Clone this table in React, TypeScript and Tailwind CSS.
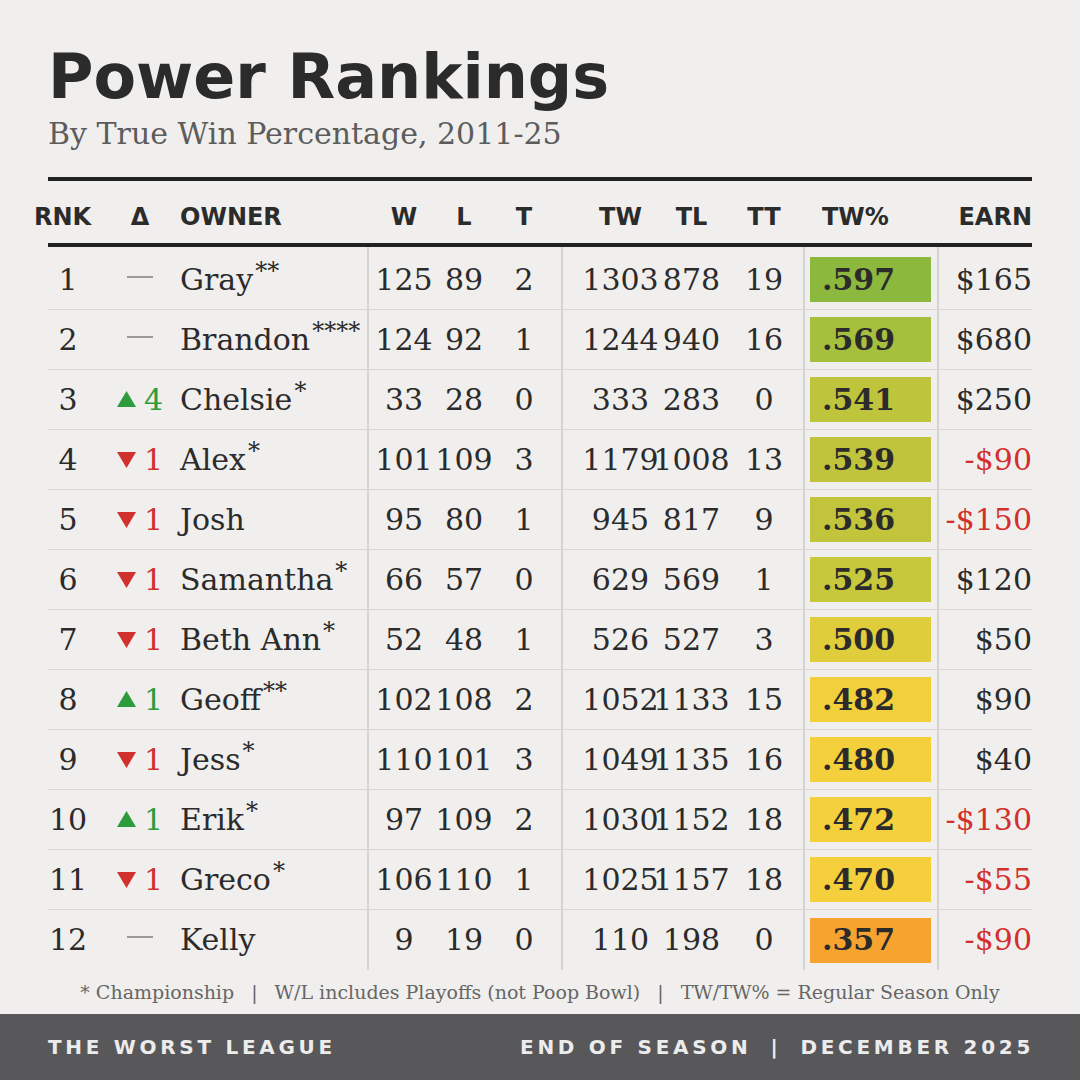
import React from "react";

type Row = {
  rank: number;
  dir: "up" | "down" | "none";
  delta?: number;
  name: string;
  stars: string;
  w: number;
  l: number;
  t: number;
  tw: number;
  tl: number;
  tt: number;
  pct: string;
  box: string;
  earn: string;
  neg: boolean;
};

const rows: Row[] = [
  { rank: 1, dir: "none", name: "Gray", stars: "**", w: 125, l: 89, t: 2, tw: 1303, tl: 878, tt: 19, pct: ".597", box: "bg-[#8bb83d]", earn: "$165", neg: false },
  { rank: 2, dir: "none", name: "Brandon", stars: "****", w: 124, l: 92, t: 1, tw: 1244, tl: 940, tt: 16, pct: ".569", box: "bg-[#a5c03d]", earn: "$680", neg: false },
  { rank: 3, dir: "up", delta: 4, name: "Chelsie", stars: "*", w: 33, l: 28, t: 0, tw: 333, tl: 283, tt: 0, pct: ".541", box: "bg-[#bec43c]", earn: "$250", neg: false },
  { rank: 4, dir: "down", delta: 1, name: "Alex", stars: "*", w: 101, l: 109, t: 3, tw: 1179, tl: 1008, tt: 13, pct: ".539", box: "bg-[#bfc43c]", earn: "-$90", neg: true },
  { rank: 5, dir: "down", delta: 1, name: "Josh", stars: "", w: 95, l: 80, t: 1, tw: 945, tl: 817, tt: 9, pct: ".536", box: "bg-[#c2c53c]", earn: "-$150", neg: true },
  { rank: 6, dir: "down", delta: 1, name: "Samantha", stars: "*", w: 66, l: 57, t: 0, tw: 629, tl: 569, tt: 1, pct: ".525", box: "bg-[#c8c83c]", earn: "$120", neg: false },
  { rank: 7, dir: "down", delta: 1, name: "Beth Ann", stars: "*", w: 52, l: 48, t: 1, tw: 526, tl: 527, tt: 3, pct: ".500", box: "bg-[#dfcd3c]", earn: "$50", neg: false },
  { rank: 8, dir: "up", delta: 1, name: "Geoff", stars: "**", w: 102, l: 108, t: 2, tw: 1052, tl: 1133, tt: 15, pct: ".482", box: "bg-[#f2d03c]", earn: "$90", neg: false },
  { rank: 9, dir: "down", delta: 1, name: "Jess", stars: "*", w: 110, l: 101, t: 3, tw: 1049, tl: 1135, tt: 16, pct: ".480", box: "bg-[#f3d03c]", earn: "$40", neg: false },
  { rank: 10, dir: "up", delta: 1, name: "Erik", stars: "*", w: 97, l: 109, t: 2, tw: 1030, tl: 1152, tt: 18, pct: ".472", box: "bg-[#f4d03c]", earn: "-$130", neg: true },
  { rank: 11, dir: "down", delta: 1, name: "Greco", stars: "*", w: 106, l: 110, t: 1, tw: 1025, tl: 1157, tt: 18, pct: ".470", box: "bg-[#f5cf3c]", earn: "-$55", neg: true },
  { rank: 12, dir: "none", name: "Kelly", stars: "", w: 9, l: 19, t: 0, tw: 110, tl: 198, tt: 0, pct: ".357", box: "bg-[#f7a32f]", earn: "-$90", neg: true },
];

function Delta({ r }: { r: Row }) {
  if (r.dir === "none") {
    return <div className="w-[26px] h-[2px] bg-[#9a9a9a] mb-[6px]" />;
  }
  const up = r.dir === "up";
  return (
    <div className={`flex items-center gap-[8px] ${up ? "text-[#2e9b3c]" : "text-[#d0312d]"}`}>
      <svg width="19" height="16" viewBox="0 0 19 16" className={up ? "mb-[1px]" : ""}>
        {up ? (
          <polygon points="9.5,0 19,16 0,16" fill="#2e9b3c" />
        ) : (
          <polygon points="0,0 19,0 9.5,16" fill="#d0312d" />
        )}
      </svg>
      <span>{r.delta}</span>
    </div>
  );
}

const vline = "border-l-2 border-[#d5d4d2]";

function DataRow({ r, last }: { r: Row; last: boolean }) {
  return (
    <div className={`flex h-[60px] ${last ? "" : "border-b border-[#d8d7d5]"}`}>
      <div className="w-[40px] flex items-center justify-center">{r.rank}</div>
      <div className="w-[92px] pl-[12px] flex items-center justify-center">
        <Delta r={r} />
      </div>
      <div className="w-[187px] flex items-center whitespace-nowrap">
        <span>{r.name}</span>
        {r.stars && <span className="relative -top-[9px] ml-[2px] text-[24px]">{r.stars}</span>}
      </div>
      <div className={`w-[67px] ${vline} pl-[5px] flex items-center justify-center`}>{r.w}</div>
      <div className="w-[60px] flex items-center justify-center">{r.l}</div>
      <div className="w-[67px] pr-[7px] flex items-center justify-center">{r.t}</div>
      <div className={`w-[95px] ${vline} pl-[22px] flex items-center justify-center`}>{r.tw}</div>
      <div className="w-[71px] flex items-center justify-center">{r.tl}</div>
      <div className="w-[76px] pr-[2px] flex items-center justify-center">{r.tt}</div>
      <div className={`w-[134px] ${vline} pl-[5px] flex items-center`}>
        <div className={`w-[121px] h-[45px] ${r.box} flex items-center pl-[12px] font-bold`}>{r.pct}</div>
      </div>
      <div className={`w-[95px] ${vline} flex items-center justify-end ${r.neg ? "text-[#d3302d]" : ""}`}>{r.earn}</div>
    </div>
  );
}

export default function App() {
  return (
    <div className="w-[1080px] h-[1080px] bg-[#f0efed] flex flex-col overflow-hidden text-[#2b2b2b]">
      <div className="px-[48px] pt-[41px]">
        <h1 className="font-['DejaVu_Sans',sans-serif] font-bold text-[62px] leading-[72px] text-[#2b2b2b]">
          Power Rankings
        </h1>
        <p className="mt-[3px] font-['DejaVu_Serif',serif] text-[30px] leading-[35px] text-[#5c5c5c]">
          By True Win Percentage, 2011-25
        </p>
        <div className="mt-[26px] h-[4px] bg-[#222222]" />
        <div className="flex h-[62px] pt-[10px] items-center font-['DejaVu_Sans',sans-serif] font-bold text-[24px] text-[#2b2b2b] whitespace-nowrap">
          <div className="w-[40px] pr-[11px] flex justify-center">RNK</div>
          <div className="w-[92px] pl-[12px] flex justify-center">Δ</div>
          <div className="w-[187px]">OWNER</div>
          <div className="w-[67px] border-l-2 border-transparent pl-[5px] flex justify-center">W</div>
          <div className="w-[60px] flex justify-center">L</div>
          <div className="w-[67px] pr-[7px] flex justify-center">T</div>
          <div className="w-[95px] border-l-2 border-transparent pl-[22px] flex justify-center">TW</div>
          <div className="w-[71px] flex justify-center">TL</div>
          <div className="w-[76px] pr-[2px] flex justify-center">TT</div>
          <div className="w-[134px] border-l-2 border-transparent pl-[17px]">TW%</div>
          <div className="w-[95px] border-l-2 border-transparent flex justify-end">EARN</div>
        </div>
        <div className="h-[4px] bg-[#222222]" />
        <div className="font-['DejaVu_Serif',serif] text-[30px] leading-none whitespace-nowrap">
          <div className="flex h-[3px]">
            <div className="w-[319px]" />
            <div className={`w-[194px] ${vline}`} />
            <div className={`w-[242px] ${vline}`} />
            <div className={`w-[134px] ${vline}`} />
            <div className={`w-[95px] ${vline}`} />
          </div>
          {rows.map((r, i) => (
            <DataRow key={r.rank} r={r} last={i === rows.length - 1} />
          ))}
        </div>
        <div className="py-[11px] flex justify-center font-['DejaVu_Serif',serif] text-[19px] leading-[22px] text-[#666666] whitespace-nowrap">
          <span>* Championship</span>
          <span className="mx-[17px]">|</span>
          <span>W/L includes Playoffs (not Poop Bowl)</span>
          <span className="mx-[17px]">|</span>
          <span>TW/TW% = Regular Season Only</span>
        </div>
      </div>
      <div className="flex-1 bg-[#58585a] px-[48px] flex items-center justify-between font-['DejaVu_Sans',sans-serif] font-bold text-[20px] tracking-[3.7px] text-[#ececec] whitespace-nowrap">
        <span>THE WORST LEAGUE</span>
        <span className="-mr-[2px]">
          <span>END OF SEASON</span>
          <span className="mx-[19px]">|</span>
          <span>DECEMBER 2025</span>
        </span>
      </div>
    </div>
  );
}
